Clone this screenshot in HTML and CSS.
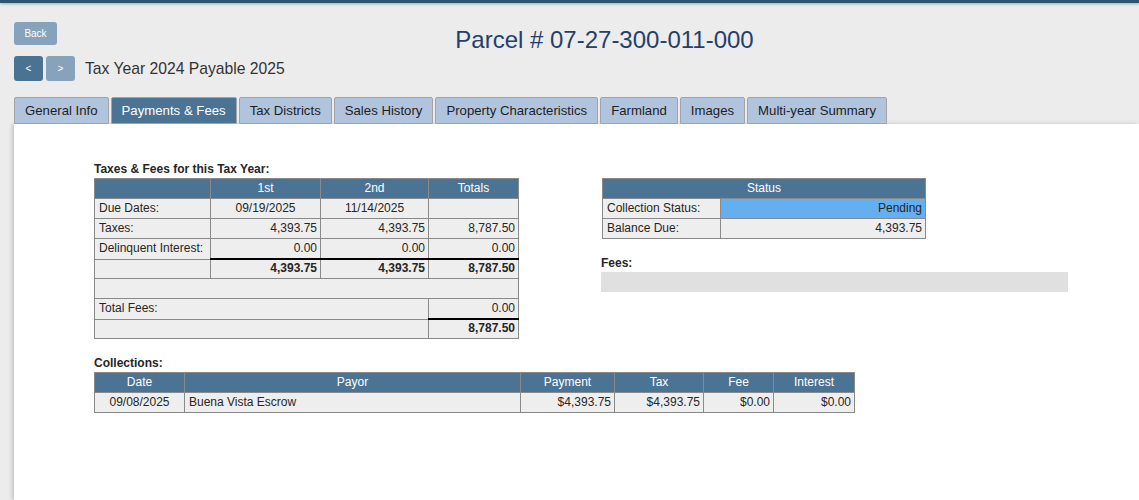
FILE: index.html
```html
<!DOCTYPE html>
<html lang="en">
<head>
    <meta charset="UTF-8">
    <meta name="viewport" content="width=device-width, initial-scale=1.0">
    <title>Parcel # 07-27-300-011-000</title>
    <link rel="stylesheet" href="styles.css">
</head>
<body>
    <div class="topbar"></div>

    <div class="page-head">
        <div class="head-row">
            <button type="button" class="btn btn-back">Back</button>
            <h1 class="parcel">Parcel # 07-27-300-011-000</h1>
        </div>
        <div class="year-row">
            <button type="button" class="btn btn-nav active">&lt;</button>
            <button type="button" class="btn btn-nav">&gt;</button>
            <span class="tax-year">Tax Year 2024 Payable 2025</span>
        </div>
    </div>

    <ul class="tabs">
        <li class="tab">General Info</li>
        <li class="tab active">Payments &amp; Fees</li>
        <li class="tab">Tax Districts</li>
        <li class="tab">Sales History</li>
        <li class="tab">Property Characteristics</li>
        <li class="tab">Farmland</li>
        <li class="tab">Images</li>
        <li class="tab">Multi-year Summary</li>
    </ul>

    <div class="panel">
        <div class="top-row">
            <!-- Podatki i oplaty -->
            <div class="taxes">
                <h4 class="caption">Taxes &amp; Fees for this Tax Year:</h4>
                <table class="grid taxes-table">
                    <colgroup>
                        <col style="width: 116px">
                        <col style="width: 110px">
                        <col style="width: 108px">
                        <col style="width: 90px">
                    </colgroup>
                    <tr>
                        <th></th>
                        <th>1st</th>
                        <th>2nd</th>
                        <th>Totals</th>
                    </tr>
                    <tr>
                        <td>Due Dates:</td>
                        <td class="center">09/19/2025</td>
                        <td class="center">11/14/2025</td>
                        <td></td>
                    </tr>
                    <tr>
                        <td>Taxes:</td>
                        <td class="num">4,393.75</td>
                        <td class="num">4,393.75</td>
                        <td class="num">8,787.50</td>
                    </tr>
                    <tr>
                        <td>Delinquent Interest:</td>
                        <td class="num">0.00</td>
                        <td class="num">0.00</td>
                        <td class="num">0.00</td>
                    </tr>
                    <tr class="sum-row">
                        <td></td>
                        <td class="num total">4,393.75</td>
                        <td class="num total">4,393.75</td>
                        <td class="num total">8,787.50</td>
                    </tr>
                    <tr>
                        <td colspan="4">&nbsp;</td>
                    </tr>
                    <tr>
                        <td colspan="3">Total Fees:</td>
                        <td class="num">0.00</td>
                    </tr>
                    <tr class="sum-row">
                        <td colspan="3"></td>
                        <td class="num total">8,787.50</td>
                    </tr>
                </table>
            </div>

            <!-- Status -->
            <div class="side">
                <table class="grid status-table">
                    <colgroup>
                        <col style="width: 118px">
                        <col style="width: 205px">
                    </colgroup>
                    <tr>
                        <th colspan="2">Status</th>
                    </tr>
                    <tr>
                        <td>Collection Status:</td>
                        <td class="num pending">Pending</td>
                    </tr>
                    <tr>
                        <td>Balance Due:</td>
                        <td class="num">4,393.75</td>
                    </tr>
                </table>
                <h4 class="caption fees-caption">Fees:</h4>
                <div class="fees-bar"></div>
            </div>
        </div>

        <!-- Wplaty -->
        <h4 class="caption collections-caption">Collections:</h4>
        <table class="grid collections">
            <colgroup>
                <col style="width: 90px">
                <col style="width: 336px">
                <col style="width: 94px">
                <col style="width: 89px">
                <col style="width: 70px">
                <col style="width: 81px">
            </colgroup>
            <tr>
                <th>Date</th>
                <th>Payor</th>
                <th>Payment</th>
                <th>Tax</th>
                <th>Fee</th>
                <th>Interest</th>
            </tr>
            <tr>
                <td class="center">09/08/2025</td>
                <td>Buena Vista Escrow</td>
                <td class="num">$4,393.75</td>
                <td class="num">$4,393.75</td>
                <td class="num">$0.00</td>
                <td class="num">$0.00</td>
            </tr>
        </table>
    </div>
</body>
</html>
```

FILE: styles.css
```css
* {
    box-sizing: border-box;
}

body {
    margin: 0;
    background: #ececec;
    font-family: "Liberation Sans", Arial, sans-serif;
    color: #262626;
    overflow: hidden;
}

.topbar {
    height: 3px;
    background: #2d5373;
    box-shadow: 0 1px 3px rgba(0, 0, 0, 0.3);
}

.page-head {
    padding: 19px 0 0 14px;
}

.head-row {
    display: flex;
    align-items: flex-start;
    height: 34px;
}

.btn {
    border: none;
    border-radius: 3px;
    color: #fff;
    font-family: inherit;
    padding: 0;
    cursor: pointer;
}

.btn-back {
    width: 43px;
    height: 23px;
    background: #87a2bb;
    font-size: 10px;
}

.parcel {
    flex: 1;
    margin: 5px 0 0;
    padding-left: 13px;
    text-align: center;
    font-size: 24px;
    line-height: 26px;
    font-weight: normal;
    color: #243f69;
}

.year-row {
    display: flex;
    align-items: center;
    gap: 3px;
}

.btn-nav {
    width: 29px;
    height: 25px;
    background: #87a2bb;
    font-size: 10px;
}

.btn-nav.active {
    background: #4a7293;
}

.tax-year {
    margin-left: 7px;
    font-size: 15.7px;
    color: #333;
}

.tabs {
    display: flex;
    gap: 2px;
    list-style: none;
    margin: 16px 0 0;
    padding: 0 0 0 14px;
}

.tab {
    height: 27px;
    padding: 0 10px;
    border: 1px solid #a3a3a3;
    border-radius: 2px 2px 0 0;
    background: #b0c4de;
    font-size: 13.2px;
    line-height: 25px;
    color: #1e1e1e;
    cursor: pointer;
}

.tab.active {
    background: #4b7394;
    color: #fff;
}

.panel {
    margin-left: 14px;
    min-height: 376px;
    padding: 38px 0 0 80px;
    background: #fff;
    box-shadow: -2px 0 4px rgba(0, 0, 0, 0.18);
}

.top-row {
    display: flex;
    align-items: flex-start;
}

.caption {
    margin: 0 0 2px;
    font-size: 12px;
    line-height: 14px;
    font-weight: bold;
    color: #262626;
}

.grid {
    border-collapse: collapse;
    table-layout: fixed;
    font-size: 12px;
    line-height: 15px;
}

.grid th,
.grid td {
    padding: 2px 4px;
    border: 1px solid #8a8a8a;
    background: #eeeeee;
    white-space: nowrap;
}

.grid th {
    background: #4b7394;
    color: #fff;
    font-weight: normal;
    text-align: center;
}

.grid .num {
    text-align: right;
    padding-right: 3px;
}

.grid .center {
    text-align: center;
}

.grid .total {
    font-weight: bold;
}

.taxes-table {
    width: 424px;
}

.grid .sum-row td {
    padding-top: 1px;
}

.grid .sum-row .total {
    border-top: 2px solid #000;
}

.side {
    margin: 16px 0 0 82px;
}

.status-table {
    width: 323px;
    margin-left: 1px;
}

.grid td.pending {
    background: #63aff0;
}

.fees-caption {
    margin-top: 17px;
}

.fees-bar {
    width: 467px;
    height: 20px;
    margin-top: 1px;
    background: #e0e0e0;
}

.collections-caption {
    margin-top: 17px;
}

.collections {
    width: 760px;
}
```
